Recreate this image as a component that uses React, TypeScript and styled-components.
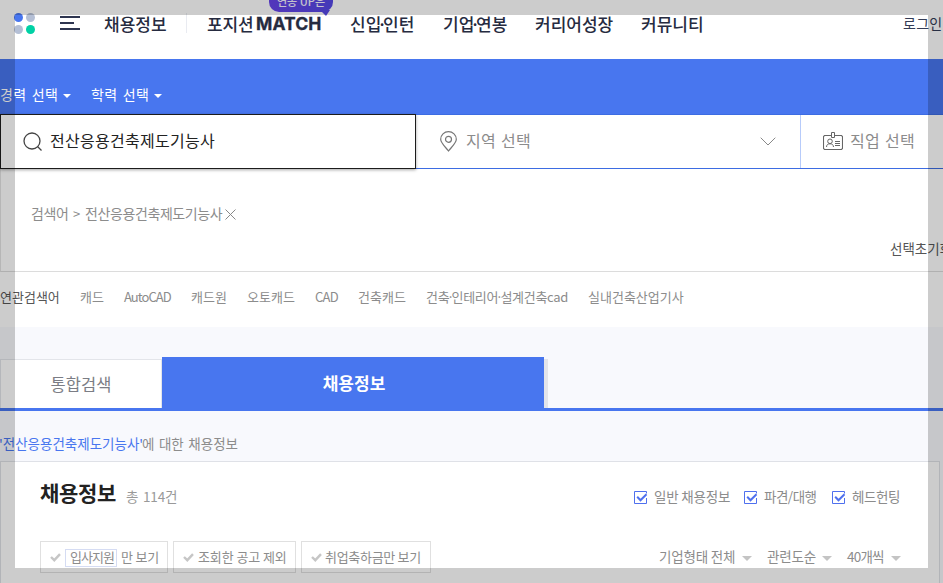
import React from 'react';
import styled, { createGlobalStyle } from 'styled-components';

const GlobalStyle = createGlobalStyle`
  * { box-sizing: border-box; }
  body { margin: 0; overflow: hidden; background: #fff; }
  svg { display: block; flex: none; }
`;

const Page = styled.div`
  position: relative;
  width: 943px;
  height: 583px;
  overflow: hidden;
  display: flex;
  flex-direction: column;
  background: #fff;
  font-family: 'Noto Sans CJK KR', sans-serif;
`;

/* A single line of text in a slot of known width. */
const Label = styled.span<{
  $w?: number; $size?: number; $color?: string; $weight?: number;
  $ls?: number; $ws?: number; $ml?: number; $dy?: number;
}>`
  flex: none;
  width: ${p => (p.$w ? `${p.$w}px` : 'auto')};
  margin-left: ${p => p.$ml ?? 0}px;
  padding-top: ${p => p.$dy ?? 0}px;
  font-size: ${p => p.$size ?? 14}px;
  font-weight: ${p => p.$weight ?? 400};
  letter-spacing: ${p => p.$ls ?? 0}px;
  word-spacing: ${p => p.$ws ?? 0}px;
  line-height: 20px;
  color: ${p => p.$color ?? '#8c8c8c'};
  white-space: nowrap;
`;

const Dot = styled.span<{ $trim: number }>`
  margin: 0 -${p => p.$trim}px;
`;

const Header = styled.header`
  position: relative;
  flex: none;
  display: flex;
  align-items: flex-start;
  height: 59px;
  padding: 13px 0 0 14px;
`;

const Nav = styled.nav`
  display: flex;
  margin-left: 20px;
`;

const NavItem = styled(Label)`
  font-size: 17px;
  font-weight: 500;
  line-height: 21px;
  color: #262b40;
`;

const Match = styled.span`
  flex: none;
  width: 94px;
  font: 700 17.5px/22px Inter, sans-serif;
  -webkit-text-stroke: 0.3px #262b40;
  letter-spacing: 0.1px;
  color: #262b40;
`;

const Divider = styled.i`
  width: 1px;
  height: 20px;
  margin-left: 16px;
  background: #e9ebf1;
`;

const Badge = styled.div`
  position: absolute;
  left: 269px;
  top: -9px;
  width: 64px;
  height: 21px;
  border-radius: 10px;
  background: linear-gradient(90deg, #6745ea, #5548e6);
  color: #f5f3ff;
  font-size: 11px;
  font-weight: 500;
  line-height: 21px;
  text-align: center;
  white-space: nowrap;

  &::after {
    content: '';
    position: absolute;
    right: 3px;
    bottom: -4px;
    border-top: 6px solid #5548e6;
    border-left: 6px solid transparent;
    border-right: 4px solid transparent;
  }
`;

const BlueBar = styled.div`
  flex: none;
  display: flex;
  align-items: center;
  height: 55px;
  padding-top: 14px;
  background: #4876ef;
`;

const Caret = styled.i<{ $color: string; $half: number; $ml: number; $dy?: number }>`
  flex: none;
  margin-left: ${p => p.$ml}px;
  margin-top: ${p => p.$dy ?? 0}px;
  border: ${p => p.$half}px solid transparent;
  border-top-color: ${p => p.$color};
  border-bottom: 0;
`;

const SearchRow = styled.div`
  flex: none;
  display: flex;
  height: 55px;
  position: relative;

  ${Label} { padding-bottom: 3px; }
`;

const KeywordField = styled.div`
  display: flex;
  align-items: center;
  width: 416px;
  padding-left: 22px;
  border: 1px solid #1c1c1c;
  box-shadow: 0 1px 3px rgba(0, 0, 0, 0.35);
  z-index: 1;
`;

const SelectField = styled.div<{ $w: number; $pl: number }>`
  display: flex;
  align-items: center;
  width: ${p => p.$w}px;
  padding-left: ${p => p.$pl}px;
  border: solid #3d6ce2;
  border-width: 1px 0;

  & + & { box-shadow: inset 1px 0 #b7cbfa; }
`;

const Conditions = styled.div`
  flex: none;
  display: flex;
  flex-direction: column;
  height: 103px;
  padding-top: 34px;
  border-left: 1px solid #e4e4e4;
  border-bottom: 1px solid #dcdcdc;
`;

const Crumbs = styled.div`
  display: flex;
  align-items: center;
  height: 20px;
  padding-left: 30px;
`;

const Reset = styled.div`
  display: flex;
  margin: 15px 0 0 889px;
`;

const Related = styled.div`
  flex: none;
  display: flex;
  align-items: center;
  height: 55px;
  padding-bottom: 6px;
`;

const Results = styled.main`
  flex: 1;
  display: flex;
  flex-direction: column;
  padding-top: 30px;
  background: #f8f9fd;
`;

const Tabs = styled.div`
  flex: none;
  display: flex;
  align-items: flex-end;
  height: 54px;
  border-bottom: 3px solid #4876ef;
`;

const Tab = styled.div<{ $active?: boolean }>`
  display: flex;
  align-items: center;
  justify-content: center;
  width: ${p => (p.$active ? 382 : 162)}px;
  height: ${p => (p.$active ? 51 : 49)}px;
  background: ${p => (p.$active ? '#4876ef' : '#fff')};
  border: ${p => (p.$active ? '0' : '1px solid #e3e5ea')};
  border-bottom: 0;
`;

const TabEdge = styled.i`
  width: 4px;
  height: 49px;
  background: #e3e4ea;
`;

const Summary = styled.div`
  flex: none;
  display: flex;
  height: 50px;
  padding-top: 22px;
`;

const Panel = styled.section`
  width: 940px;
  height: 140px;
  display: flex;
  flex-direction: column;
  background: #fff;
  border: 1px solid #dfe1e7;
`;

const TitleRow = styled.div`
  display: flex;
  align-items: center;
  height: 24px;
  margin: 22px 0 0 39px;
`;

const Title = styled.h1`
  flex: none;
  width: 86px;
  margin: 0;
  padding-bottom: 8px;
  font-size: 21px;
  font-weight: 700;
  line-height: 20px;
  letter-spacing: -0.3px;
  color: #222;
  white-space: nowrap;
`;

const CheckBox = styled.span<{ $ml: number }>`
  display: flex;
  margin-left: ${p => p.$ml}px;
  margin-top: 4px;
`;

const FilterRow = styled.div`
  display: flex;
  gap: 5px;
  margin: 33px 0 0 39px;
`;

const Filter = styled.div<{ $w: number }>`
  flex: none;
  display: flex;
  align-items: center;
  width: ${p => p.$w}px;
  height: 32px;
  padding-left: 9px;
  border: 1px solid #e0e0e0;
`;

const Tag = styled.span`
  display: flex;
  align-items: center;
  width: 52px;
  height: 18px;
  margin: 1px 0 0 4px;
  padding: 0 0 2px 4px;
  border: 1px solid #d5dcf3;
`;

const Sorting = styled.div`
  display: flex;
  align-items: center;
  height: 30px;
  margin-left: 223px;
`;

const Frame = styled.div`
  position: absolute;
  inset: 0;
  z-index: 5;
  pointer-events: none;
  border: 15px solid rgba(0, 0, 0, 0.2);
`;

const Logo = () => (
  <svg width="21" height="21" viewBox="0 0 21 21">
    <circle cx="4.5" cy="4.5" r="4.5" fill="#4876ef" />
    <circle cx="16.5" cy="4.5" r="4.5" fill="#b4bfd5" />
    <circle cx="4.5" cy="16.5" r="4.5" fill="#b4bfd5" />
    <circle cx="16.5" cy="16.5" r="4.5" fill="#00d1a5" />
  </svg>
);

const MenuLines = styled.svg`margin: 3px 0 0 25px;`;

const Cross = styled.svg`margin: 2px 0 0 2px;`;

const DownArrow = styled.svg`margin: 0 0 0 229px;`;

const Tick = () => (
  <svg width="11" height="9" viewBox="0 0 11 9" fill="none" stroke="#c6c6c6" strokeWidth="2.4">
    <path d="M1 4l3.3 3.2L10 1.2" />
  </svg>
);

const BoxTick = ({ ml = 0 }: { ml?: number }) => (
  <CheckBox $ml={ml}>
    <svg width="14" height="14" viewBox="0 0 14 14" fill="none" stroke="#4f70ee">
      <path d="M12.5 7v5.5H.5V.5h12v2" />
      <path d="M3.2 5.8l3.3 3.5 6-6" strokeWidth="2" />
    </svg>
  </CheckBox>
);

/* Sets the middle dots of a compound name tight between its words. */
const dotted = (text: string, trim: number) =>
  text.split('·').map((word, i) => (
    <React.Fragment key={word}>
      {i > 0 && <Dot $trim={trim}>·</Dot>}
      {word}
    </React.Fragment>
  ));

const related: [string, number, number][] = [
  ['캐드', 44, 0], ['AutoCAD', 67, -0.95], ['캐드원', 56, 0], ['오토캐드', 68, 0],
  ['CAD', 43, -0.7], ['건축캐드', 68, 0], ['건축·인테리어·설계건축cad', 162, -0.3], ['실내건축산업기사', 100, 0],
];

export default function App() {
  return (
    <Page>
      <GlobalStyle />
      <Header>
        <Logo />
        <MenuLines width="20" height="15" viewBox="0 0 20 15" fill="#2e3550">
          <rect width="20" height="2" />
          <rect y="6" width="14" height="2" />
          <rect y="12" width="20" height="2" />
        </MenuLines>
        <Nav>
          <NavItem $w={66} $ml={4}>채용정보</NavItem>
          <Divider />
        </Nav>
        <Nav>
          <NavItem $w={49} $ls={-0.2}>포지션</NavItem>
          <Match>MATCH</Match>
          <NavItem $w={93}>{dotted('신입·인턴', 4)}</NavItem>
          <NavItem $w={92}>{dotted('기업·연봉', 4)}</NavItem>
          <NavItem $w={106}>커리어성장</NavItem>
          <NavItem $w={262}>커뮤니티</NavItem>
          <Label $size={14} $ls={0.3} $color="#333b55">로그인</Label>
        </Nav>
        <Badge>연봉 UP은</Badge>
      </Header>

      <BlueBar>
        <Label $w={59} $color="#fff" $ws={2} $ls={0.3}>경력 선택</Label>
        <Caret $color="#fff" $half={4} $ml={4} $dy={4} />
        <Label $w={60} $ml={20} $color="#fff" $ws={2} $ls={0.3}>학력 선택</Label>
        <Caret $color="#fff" $half={4} $ml={3} $dy={4} />
      </BlueBar>

      <SearchRow>
        <KeywordField>
          <svg width="20" height="20" viewBox="0 0 20 20" fill="none" stroke="#444" strokeWidth="1.3">
            <circle cx="9" cy="9" r="8" />
            <path d="M14.5 14.5l4 4" />
          </svg>
          <Label $ml={7} $size={16} $ls={0.28} $color="#222">전산응용건축제도기능사</Label>
        </KeywordField>
        <SelectField $w={384} $pl={24}>
          <svg width="17" height="21" viewBox="0 0 17 21" fill="none" stroke="#777" strokeWidth="1.2">
            <path d="M8.5 20C5 15.5 .7 12 .7 8.3a7.8 7.6 0 0 1 15.6 0C16.3 12 12 15.5 8.5 20z" />
            <circle cx="8.5" cy="8.3" r="3" />
          </svg>
          <Label $w={65} $ml={9} $size={16} $ls={0.2} $ws={1.5}>지역 선택</Label>
          <DownArrow width="16" height="9" viewBox="0 0 16 9" fill="none" stroke="#888">
            <path d="M.7.7L8 8 15.3.7" />
          </DownArrow>
        </SelectField>
        <SelectField $w={143} $pl={23}>
          <svg width="20" height="19" viewBox="0 0 20 19" fill="none" stroke="#666">
            <path d="M8 3.500H1.500l-1 1v12l1 1h17l1-1v-12l-1-1H12" strokeWidth="1.100" />
            <path d="M8.500.5h3v5h-3z" />
            <circle cx="7" cy="9.300" r="2.300" />
            <path d="M3.500 15c.2-2.500 1.500-3.200 3.500-3.200s3.300.7 3.500 3.200M12 9.500h5M12 11.500h5M12 13.500h5" />
          </svg>
          <Label $ml={7} $size={16} $ls={0.2} $ws={1.5}>직업 선택</Label>
        </SelectField>
      </SearchRow>

      <Conditions>
        <Crumbs>
          <Label $w={42} $ls={-0.4}>검색어</Label>
          <Label $w={12} $size={13} $dy={1}>&gt;</Label>
          <Label $w={138} $ls={-0.4}>전산응용건축제도기능사</Label>
          <Cross width="11" height="11" viewBox="0 0 11 11" stroke="#888">
            <path d="M.5.5l10 10M10.500.5l-10 10" />
          </Cross>
        </Crumbs>
        <Reset><Label $size={13.5} $color="#555">선택초기화</Label></Reset>
      </Conditions>

      <Related>
        <Label $w={80} $size={13} $color="#555">연관검색어</Label>
        {related.map(([text, w, ls]) => (
          <Label key={text} $w={w} $size={13} $ls={ls}>{dotted(text, 2.4)}</Label>
        ))}
      </Related>

      <Results>
        <Tabs>
          <Tab><Label $size={16.5} $ls={0.1} $color="#7b7d85">통합검색</Label></Tab>
          <Tab $active><Label $ml={2} $size={17} $weight={700} $color="#fff" $dy={1}>채용정보</Label></Tab>
          <TabEdge />
        </Tabs>
        <Summary>
          <Label $w={143} $ml={-1} $size={13.5} $color="#4876ef">'전산응용건축제도기능사'</Label>
          <Label $size={13.5} $ws={1.500}>에 대한 채용정보</Label>
        </Summary>
        <Panel>
          <TitleRow>
            <Title>채용정보</Title>
            <Label $w={508} $size={13.5} $ls={-0.2} $ws={2} $color="#999">총 114건</Label>
            <BoxTick />
            <Label $w={76} $ml={6} $size={13.5} $ls={-0.2}>일반 채용정보</Label>
            <BoxTick ml={14} />
            <Label $w={54} $ml={6} $size={13.5} $ls={-0.5}>파견/대행</Label>
            <BoxTick ml={14} />
            <Label $ml={6} $size={13.5} $ls={-0.4}>헤드헌팅</Label>
          </TitleRow>
          <FilterRow>
            <Filter $w={128}>
              <Tick />
              <Tag><Label $size={13} $ls={-1}>입사지원</Label></Tag>
              <Label $ml={4} $size={13} $ls={-0.2}>만 보기</Label>
            </Filter>
            <Filter $w={123}>
              <Tick />
              <Label $ml={4} $size={13} $ls={-0.1}>조회한 공고 제외</Label>
            </Filter>
            <Filter $w={130}>
              <Tick />
              <Label $ml={3} $size={13} $ls={-0.3}>취업축하금만 보기</Label>
            </Filter>
            <Sorting>
              <Label $w={78} $size={13.5} $ls={-0.2}>기업형태 전체</Label>
              <Caret $color="#c4c4c4" $half={5} $ml={5} $dy={4} />
              <Label $w={50} $ml={15} $size={13.5} $ls={-0.2}>관련도순</Label>
              <Caret $color="#c4c4c4" $half={5} $ml={5} $dy={4} />
              <Label $w={39} $ml={15} $size={13.5} $ls={-0.8}>40개씩</Label>
              <Caret $color="#c4c4c4" $half={5} $ml={5} $dy={4} />
            </Sorting>
          </FilterRow>
        </Panel>
      </Results>
      <Frame />
    </Page>
  );
}
